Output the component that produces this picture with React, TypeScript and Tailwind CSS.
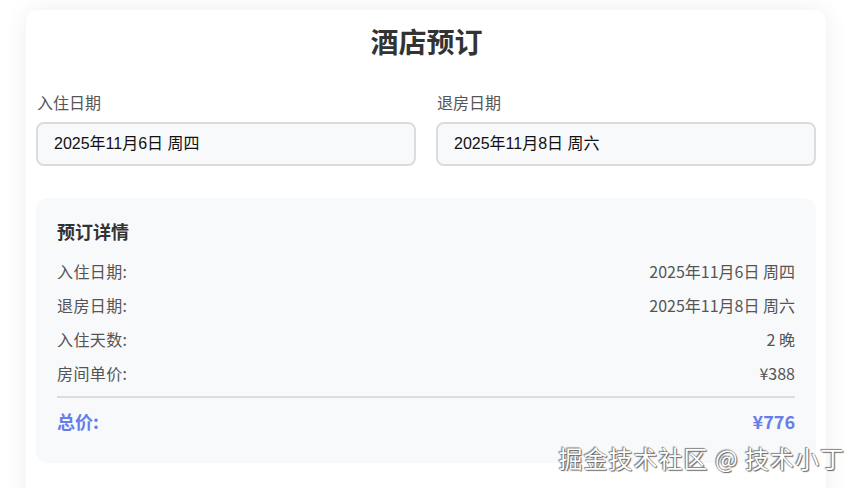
import React from "react";

const CJK = "font-['Noto_Sans_CJK_SC','Noto_Sans',sans-serif]";

interface DetailRow {
  label: string;
  value: string;
}

const ROWS: DetailRow[] = [
  { label: "入住日期:", value: "2025年11月6日 周四" },
  { label: "退房日期:", value: "2025年11月8日 周六" },
  { label: "入住天数:", value: "2 晚" },
  { label: "房间单价:", value: "¥388" },
];

function DateField({ label, value }: { label: string; value: string }) {
  return (
    <div className="flex flex-col">
      <label className={`${CJK} text-[16px] leading-[22px] text-[#555] mb-[9px] pl-[1px]`}>{label}</label>
      <div className="h-[44px] rounded-lg border-2 border-[#dcdcdc] bg-[#f8f9fa] pl-[16px] flex items-center text-[16px] text-[#111] font-['Liberation_Sans','Noto_Sans_CJK_SC',sans-serif]">
        {value}
      </div>
    </div>
  );
}

export default function App() {
  return (
    <div className="relative min-h-[488px] h-[488px] overflow-hidden bg-white">
      <div className="mx-[26px] mt-[10px] w-[800px] h-[520px] bg-white rounded-xl shadow-[0_0_24px_rgba(0,0,0,0.07)] pt-[14px] px-[10px]">
        <h1 className={`${CJK} text-center text-[28px] leading-[34px] font-bold text-[#333] pl-[1px]`}>酒店预订</h1>

        <div className="grid grid-cols-2 gap-[20px] mt-[33px]">
          <DateField label="入住日期" value="2025年11月6日 周四" />
          <DateField label="退房日期" value="2025年11月8日 周六" />
        </div>

        <div className={`${CJK} mt-[32px] rounded-xl bg-[#f8f9fb] px-[21px] pt-[20px] pb-[22px]`}>
          <h2 className="text-[18px] leading-[27px] font-bold text-[#333] mb-[9px]">预订详情</h2>
          <div className="flex flex-col">
            {ROWS.map((row) => (
              <div key={row.label} className="flex justify-between py-[6px] leading-[22px] text-[16px] text-[#555]">
                <span className="tracking-[0.4px]">{row.label}</span>
                <span>{row.value}</span>
              </div>
            ))}
          </div>
          <div className="mt-[6px] border-t-2 border-[#dddddd]" />
          <div className="flex justify-between pt-[10px] pb-[6px] text-[18px] leading-[27px] font-bold text-[#667eea]">
            <span>总价:</span>
            <span>¥776</span>
          </div>
        </div>
      </div>

      <div
        className={`${CJK} absolute right-[15px] bottom-[14px] text-[24px] leading-[32px] text-white tracking-[1px] [text-shadow:0_0_1px_#555,1px_1px_1px_#666,-1px_-1px_1px_#888]`}
      >
        掘金技术社区 @ 技术小丁
      </div>
    </div>
  );
}
